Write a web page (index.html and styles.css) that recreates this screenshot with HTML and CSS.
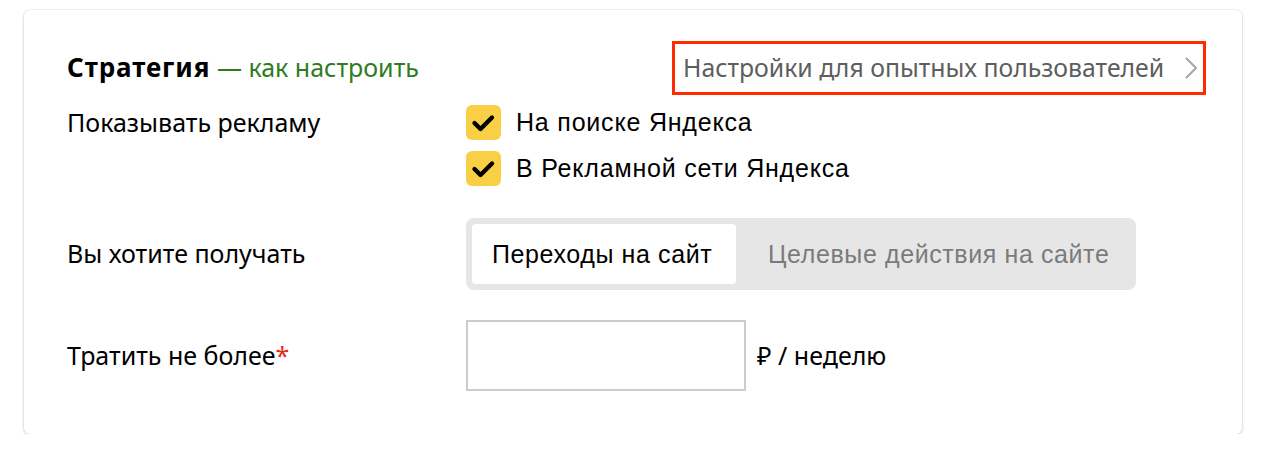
FILE: index.html
```html
<!DOCTYPE html>
<html lang="ru">
<head>
<meta charset="utf-8">
<link rel="stylesheet" href="styles.css">
</head>
<body>
<div class="card">
  <div class="header">
    <div class="title"><span class="title-main">Стратегия</span> <span class="title-link">— как настроить</span></div>
    <div class="adv">
      <span class="adv-text">Настройки для опытных пользователей</span>
      <svg class="chev" width="12" height="22" viewBox="0 0 12 22"><path d="M1 1 L11 11 L1 21" fill="none" stroke="#a6a6a6" stroke-width="2"/></svg>
    </div>
  </div>
  <div class="row row-top">
    <div class="label label-top">Показывать рекламу</div>
    <div class="checks">
      <label class="check">
        <span class="box"><svg width="35" height="35" viewBox="0 0 35 35"><path d="M8.5 18 L14.5 24 L26 12.5" fill="none" stroke="#000" stroke-width="4.4" stroke-linecap="round" stroke-linejoin="round"/></svg></span>
        <span class="check-text">На поиске Яндекса</span>
      </label>
      <label class="check">
        <span class="box"><svg width="35" height="35" viewBox="0 0 35 35"><path d="M8.5 18 L14.5 24 L26 12.5" fill="none" stroke="#000" stroke-width="4.4" stroke-linecap="round" stroke-linejoin="round"/></svg></span>
        <span class="check-text">В Рекламной сети Яндекса</span>
      </label>
    </div>
  </div>
  <div class="row row-seg">
    <div class="label">Вы хотите получать</div>
    <div class="seg">
      <div class="seg-item seg-active">Переходы на сайт</div>
      <div class="seg-item">Целевые действия на сайте</div>
    </div>
  </div>
  <div class="row row-input">
    <div class="label">Тратить не более<span class="req">*</span></div>
    <div class="input"></div>
    <div class="unit">₽ / неделю</div>
  </div>
</div>
</body>
</html>
```

FILE: styles.css
```css
html, body {
  margin: 0;
  padding: 0;
  background: #fff;
}
body {
  font-family: "Noto Sans", "Liberation Sans", sans-serif;
  color: #000;
}
.card {
  margin: 10px 0 0 24px;
  width: 1218px;
  height: 424px;
  box-sizing: border-box;
  background: #fff;
  border-radius: 6px;
  box-shadow: 0 1px 3px rgba(0,0,0,0.18), 0 0 0 1px rgba(0,0,0,0.04);
  padding: 31px 36px 0 43px;
}
.header {
  display: flex;
  justify-content: space-between;
  align-items: center;
  height: 54px;
}
.title {
  font-size: 25px;
  padding-bottom: 3px;
}
.title-main {
  font-weight: 700;
  font-size: 26px;
  letter-spacing: 0.9px;
}
.title-link {
  color: #2f7c1f;
}
.adv {
  box-sizing: border-box;
  height: 54px;
  border: 3px solid #ff2a00;
  display: flex;
  align-items: center;
  justify-content: space-between;
  padding: 0 6px 0 8px;
  width: 534px;
}
.adv-text {
  font-size: 24.8px;
  color: #5e5e5e;
  white-space: nowrap;
  padding-bottom: 2px;
}
.chev {
  display: block;
  flex: none;
}
.row {
  display: flex;
  align-items: center;
}
.row-top {
  align-items: flex-start;
  margin-top: 10px;
}
.label {
  width: 399px;
  flex: none;
  font-size: 25px;
  padding-bottom: 2px;
}
.label-top {
  line-height: 35px;
}
.checks {
  display: flex;
  flex-direction: column;
  gap: 11px;
}
.check {
  display: flex;
  align-items: center;
  height: 35px;
  gap: 15px;
}
.box {
  width: 35px;
  height: 35px;
  border-radius: 6px;
  background: #f9cf45;
  display: block;
}
.box svg {
  display: block;
}
.check-text {
  font-family: "Liberation Sans", Arial, sans-serif;
  font-size: 25px;
  letter-spacing: 0.8px;
}
.row-seg {
  margin-top: 32px;
}
.seg {
  display: flex;
  align-items: center;
  background: #e6e6e6;
  border-radius: 8px;
  padding: 6px;
  width: 670px;
  height: 72px;
  box-sizing: border-box;
}
.seg-item {
  font-family: "Liberation Sans", Arial, sans-serif;
  font-size: 25px;
  letter-spacing: 0.6px;
  color: #7b7b7b;
  height: 60px;
  display: flex;
  align-items: center;
  padding: 0 20px 0 32px;
  white-space: nowrap;
}
.seg-active {
  background: #fff;
  color: #000;
  border-radius: 4px;
  width: 264px;
  box-sizing: border-box;
  padding: 0 20px;
}
.row-input {
  margin-top: 30px;
}
.req {
  color: #e8261c;
}
.input {
  box-sizing: border-box;
  width: 280px;
  height: 71px;
  border: 2px solid #cccccc;
  background: #fff;
}
.unit {
  font-size: 25px;
  margin-left: 11px;
  padding-bottom: 2px;
}
```
